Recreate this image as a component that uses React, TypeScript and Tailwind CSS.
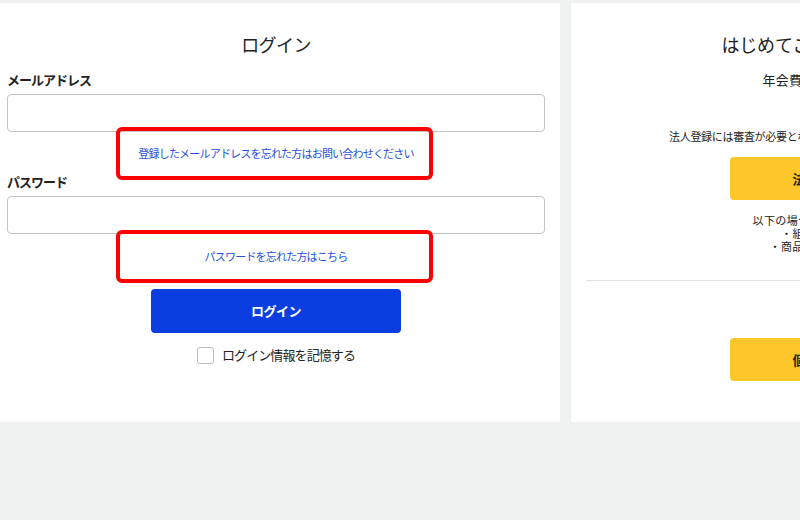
import React from "react";

// Login page: two cards side by side (login / first-time registration)

const FONT = { fontFamily: '"Noto Sans CJK JP", "Noto Sans", sans-serif' };

function Highlight({ children }: { children: React.ReactNode }) {
  return (
    <div className="relative flex h-[16px] items-center justify-center">
      <span className="text-[11px] leading-[16px] tracking-[-0.8px] text-[#2450e0]">
        {children}
      </span>
      <div className="pointer-events-none absolute left-[109px] top-[-18px] h-[53px] w-[317px] rounded-[6px] border-[4px] border-[#ff0000]" />
    </div>
  );
}

function LoginCard() {
  return (
    <div className="flex h-[419px] w-[568px] shrink-0 flex-col bg-white px-[15px] pt-[29px]">
      <h1 className="text-center text-[18px] leading-[24px] tracking-[-0.6px] text-[#222]">
        ログイン
      </h1>

      <label className="mt-[15px] text-[13px] font-bold leading-[18px] tracking-[-1px] text-[#222]">
        メールアドレス
      </label>
      <input
        type="email"
        className="mt-[5px] h-[38px] w-full rounded-[4px] border border-[#c4c4c4] bg-white px-3 outline-none"
      />
      <div className="mt-[13px]">
        <Highlight>登録したメールアドレスを忘れた方はお問い合わせください</Highlight>
      </div>

      <label className="mt-[12px] text-[13px] font-bold leading-[18px] tracking-[-1px] text-[#222]">
        パスワード
      </label>
      <input
        type="password"
        className="mt-[5px] h-[38px] w-full rounded-[4px] border border-[#c4c4c4] bg-white px-3 outline-none"
      />
      <div className="mt-[14px]">
        <Highlight>パスワードを忘れた方はこちら</Highlight>
      </div>

      <button
        type="button"
        className="mx-auto mt-[25px] h-[44px] w-[250px] rounded-[4px] bg-[#0b3ee0] text-[13px] font-bold tracking-[-0.5px] text-white"
      >
        ログイン
      </button>

      <label className="mt-[13px] flex h-[18px] items-center justify-center gap-[8px]">
        <span className="block h-[17px] w-[17px] rounded-[3px] border border-[#bdbdbd] bg-white" />
        <span className="text-[13px] leading-[18px] tracking-[-0.9px] text-[#222]">
          ログイン情報を記憶する
        </span>
      </label>
    </div>
  );
}

function RegisterCard() {
  return (
    <div className="flex h-[419px] w-[568px] shrink-0 flex-col bg-white px-[15px] pt-[29px] text-center text-[#222]">
      <h2 className="text-[18px] leading-[24px] tracking-[-0.2px]">
        はじめてご利用のお客様はこちら
      </h2>
      <p className="mt-[15px] text-[13px] leading-[18px] tracking-[0.2px]">
        年会費・入会金は一切無料です
      </p>

      <p className="mt-[39px] text-[11px] leading-[16px] tracking-[-0.3px]">
        法人登録には審査が必要となります。審査には数日かかる場合がございます。
      </p>
      <button
        type="button"
        className="mx-auto mt-[13px] h-[43px] w-[250px] rounded-[4px] bg-[#fdc62b] text-[13px] font-bold tracking-[-0.5px] text-[#222]"
      >
        法人のお客様はこちら
      </button>
      <div className="mt-[14px] flex flex-col text-[11px] leading-[13px] tracking-[0.4px]">
        <p>以下の場合は法人としてご登録ください</p>
        <p>・組織として取引を行う場合</p>
        <p>・商品を継続的に仕入れたい場合</p>
      </div>

      <div className="mt-[27px] h-px w-full bg-[#e2e2e2]" />

      <button
        type="button"
        className="mx-auto mt-[57px] h-[43px] w-[250px] rounded-[4px] bg-[#fdc62b] text-[13px] font-bold tracking-[-0.5px] text-[#222]"
      >
        個人のお客様はこちら
      </button>
    </div>
  );
}

export default function App() {
  return (
    <div className="h-[520px] w-full overflow-hidden bg-[#eff0f0] pt-[3px]" style={FONT}>
      <div className="ml-[-8px] flex gap-[11px]">
        <LoginCard />
        <RegisterCard />
      </div>
    </div>
  );
}
